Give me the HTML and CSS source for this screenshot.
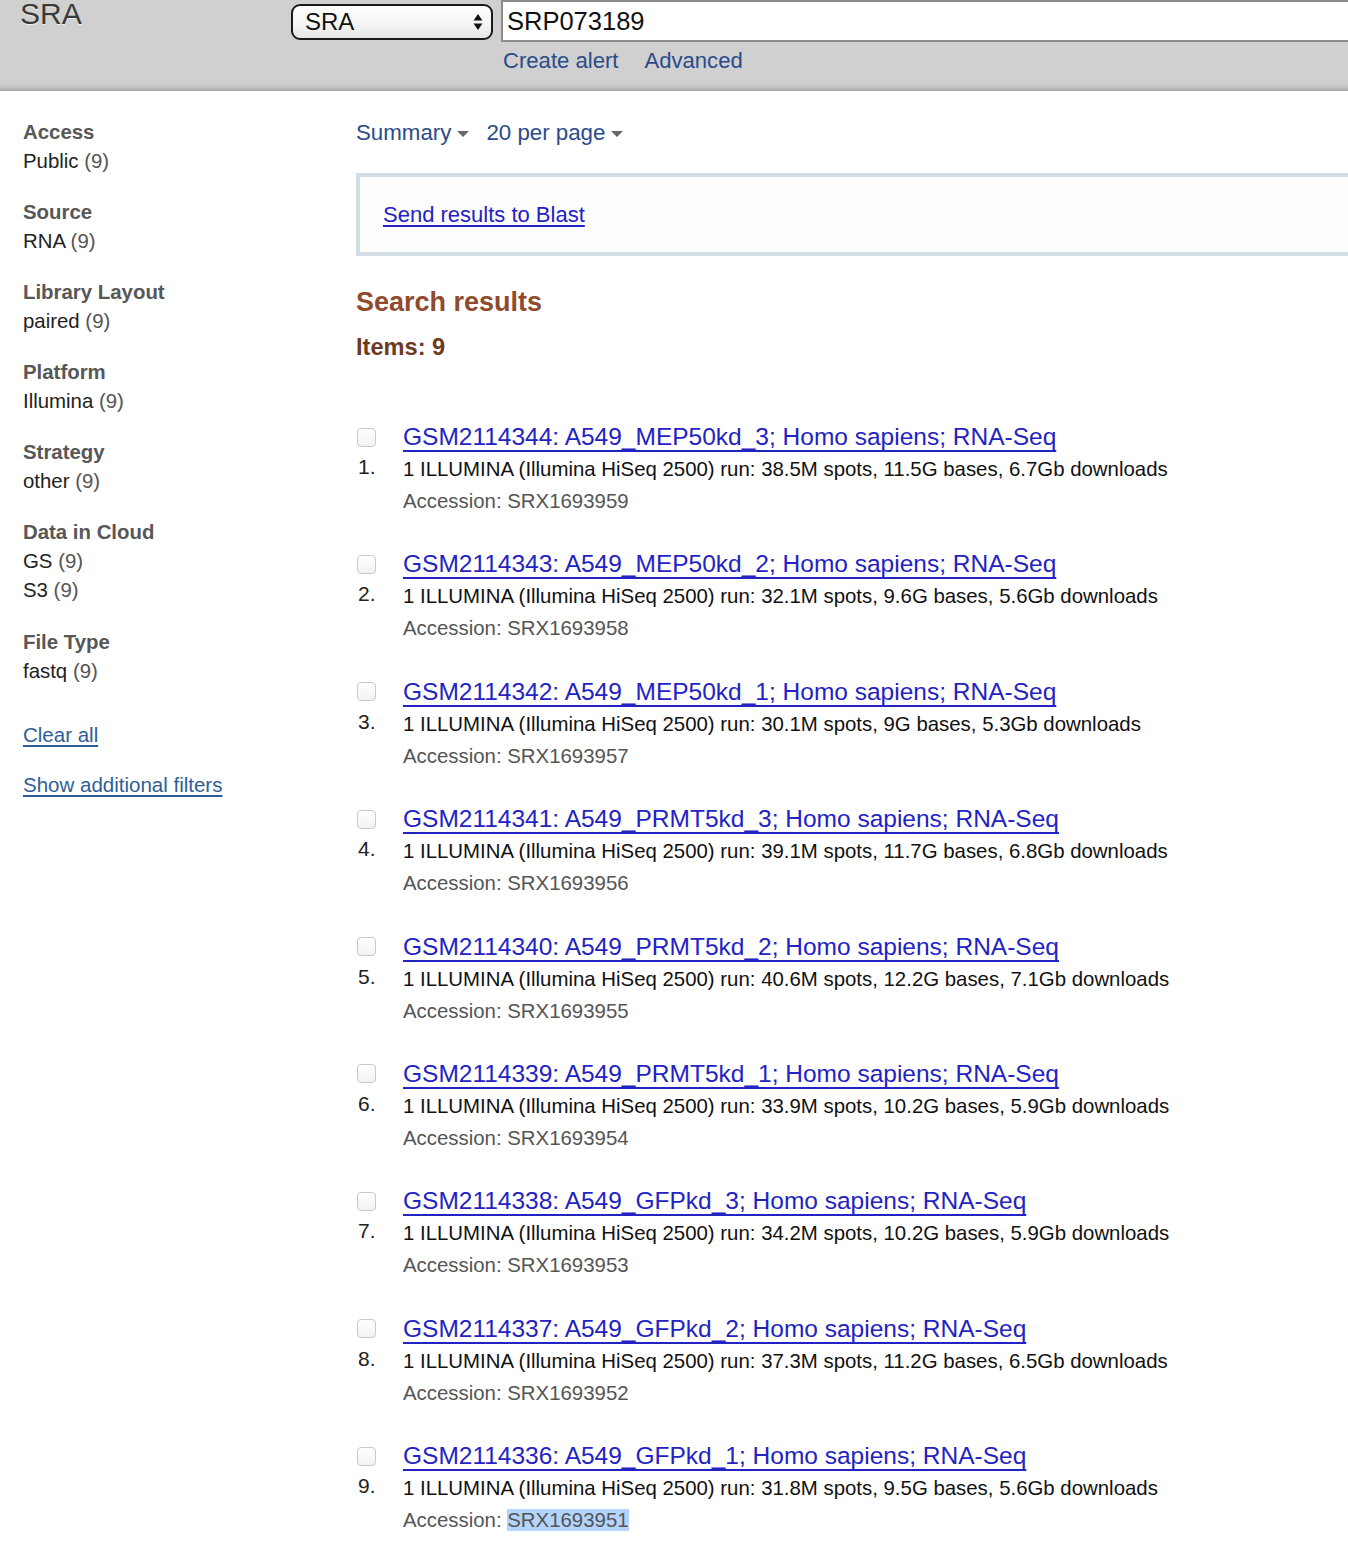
FILE: index.html
```html
<!DOCTYPE html>
<html>
<head>
<meta charset="utf-8">
<title>SRA results</title>
<link rel="stylesheet" href="styles.css">
</head>
<body>
<header class="masthead">
  <div class="brand">SRA</div>
  <div class="search">
    <div class="search-row">
      <div class="db-select"><span>SRA</span>
        <svg class="updown" width="10" height="18" viewBox="0 0 10 18"><path d="M5 1 L9.5 7.5 H0.5 Z" fill="#111"/><path d="M5 17 L9.5 10.5 H0.5 Z" fill="#111"/></svg>
      </div>
      <div class="term">SRP073189</div>
    </div>
    <div class="search-links"><a href="#">Create alert</a><a href="#">Advanced</a></div>
  </div>
</header>

<div class="page">
  <aside class="filters">
    <div class="fgroup"><div class="fhead">Access</div><div class="fval">Public <span class="cnt">(9)</span></div></div>
    <div class="fgroup"><div class="fhead">Source</div><div class="fval">RNA <span class="cnt">(9)</span></div></div>
    <div class="fgroup"><div class="fhead">Library Layout</div><div class="fval">paired <span class="cnt">(9)</span></div></div>
    <div class="fgroup"><div class="fhead">Platform</div><div class="fval">Illumina <span class="cnt">(9)</span></div></div>
    <div class="fgroup"><div class="fhead">Strategy</div><div class="fval">other <span class="cnt">(9)</span></div></div>
    <div class="fgroup"><div class="fhead">Data in Cloud</div><div class="fval">GS <span class="cnt">(9)</span></div><div class="fval">S3 <span class="cnt">(9)</span></div></div>
    <div class="fgroup"><div class="fhead">File Type</div><div class="fval">fastq <span class="cnt">(9)</span></div></div>
    <a class="flink clear" href="#">Clear all</a>
    <a class="flink" href="#">Show additional filters</a>
  </aside>

  <main class="content">
    <div class="display-bar">
      <span class="dd">Summary<i class="caret"></i></span>
      <span class="dd">20 per page<i class="caret"></i></span>
    </div>
    <div class="blast-box"><a href="#">Send results to Blast</a></div>
    <h2 class="results-title">Search results</h2>
    <h3 class="items">Items: 9</h3>

    <ol class="results">
      <li class="result"><span class="chk"></span><span class="num">1.</span><a class="rtitle" href="#">GSM2114344: A549_MEP50kd_3; Homo sapiens; RNA-Seq</a><div class="desc">1 ILLUMINA (Illumina HiSeq 2500) run: 38.5M spots, 11.5G bases, 6.7Gb downloads</div><div class="acc">Accession: SRX1693959</div></li>
      <li class="result"><span class="chk"></span><span class="num">2.</span><a class="rtitle" href="#">GSM2114343: A549_MEP50kd_2; Homo sapiens; RNA-Seq</a><div class="desc">1 ILLUMINA (Illumina HiSeq 2500) run: 32.1M spots, 9.6G bases, 5.6Gb downloads</div><div class="acc">Accession: SRX1693958</div></li>
      <li class="result"><span class="chk"></span><span class="num">3.</span><a class="rtitle" href="#">GSM2114342: A549_MEP50kd_1; Homo sapiens; RNA-Seq</a><div class="desc">1 ILLUMINA (Illumina HiSeq 2500) run: 30.1M spots, 9G bases, 5.3Gb downloads</div><div class="acc">Accession: SRX1693957</div></li>
      <li class="result"><span class="chk"></span><span class="num">4.</span><a class="rtitle" href="#">GSM2114341: A549_PRMT5kd_3; Homo sapiens; RNA-Seq</a><div class="desc">1 ILLUMINA (Illumina HiSeq 2500) run: 39.1M spots, 11.7G bases, 6.8Gb downloads</div><div class="acc">Accession: SRX1693956</div></li>
      <li class="result"><span class="chk"></span><span class="num">5.</span><a class="rtitle" href="#">GSM2114340: A549_PRMT5kd_2; Homo sapiens; RNA-Seq</a><div class="desc">1 ILLUMINA (Illumina HiSeq 2500) run: 40.6M spots, 12.2G bases, 7.1Gb downloads</div><div class="acc">Accession: SRX1693955</div></li>
      <li class="result"><span class="chk"></span><span class="num">6.</span><a class="rtitle" href="#">GSM2114339: A549_PRMT5kd_1; Homo sapiens; RNA-Seq</a><div class="desc">1 ILLUMINA (Illumina HiSeq 2500) run: 33.9M spots, 10.2G bases, 5.9Gb downloads</div><div class="acc">Accession: SRX1693954</div></li>
      <li class="result"><span class="chk"></span><span class="num">7.</span><a class="rtitle" href="#">GSM2114338: A549_GFPkd_3; Homo sapiens; RNA-Seq</a><div class="desc">1 ILLUMINA (Illumina HiSeq 2500) run: 34.2M spots, 10.2G bases, 5.9Gb downloads</div><div class="acc">Accession: SRX1693953</div></li>
      <li class="result"><span class="chk"></span><span class="num">8.</span><a class="rtitle" href="#">GSM2114337: A549_GFPkd_2; Homo sapiens; RNA-Seq</a><div class="desc">1 ILLUMINA (Illumina HiSeq 2500) run: 37.3M spots, 11.2G bases, 6.5Gb downloads</div><div class="acc">Accession: SRX1693952</div></li>
      <li class="result"><span class="chk"></span><span class="num">9.</span><a class="rtitle" href="#">GSM2114336: A549_GFPkd_1; Homo sapiens; RNA-Seq</a><div class="desc">1 ILLUMINA (Illumina HiSeq 2500) run: 31.8M spots, 9.5G bases, 5.6Gb downloads</div><div class="acc">Accession: <span class="sel">SRX1693951</span></div></li>
    </ol>
  </main>
</div>
</body>
</html>
```

FILE: styles.css
```css
html, body {
  margin: 0;
  padding: 0;
  background: #fff;
}
body {
  font-family: "Liberation Sans", Arial, Helvetica, sans-serif;
  color: #222;
  width: 1348px;
  overflow: hidden;
}
a { text-decoration: none; }

.masthead {
  height: 91px;
  box-sizing: border-box;
  display: flex;
  background: linear-gradient(to bottom, #d0d0d0 0px, #d0d0d0 82px, #c4c4c4 87px, #a9a9a9 91px);
}
.brand {
  width: 291px;
  box-sizing: border-box;
  padding-left: 20px;
  font-size: 30px;
  line-height: 30px;
  margin-top: -1px;
  color: #3a3a3a;
  text-shadow: 0 1px 0 #eee;
}
.search {
  flex: 1;
  display: flex;
  flex-direction: column;
}
.search-row {
  display: flex;
  align-items: flex-start;
  gap: 8px;
}
.db-select {
  margin-top: 4px;
  width: 202px;
  height: 36px;
  box-sizing: border-box;
  border: 2px solid #1a1a1a;
  border-radius: 9px;
  background: linear-gradient(to bottom, #ffffff 0%, #f7f7f7 50%, #e6e6e6 100%);
  display: flex;
  align-items: center;
  justify-content: space-between;
  padding: 0 8px 0 12px;
  font-size: 24px;
  color: #111;
}
.term {
  flex: 1;
  height: 42px;
  box-sizing: border-box;
  border: 2px solid #8c8c8c;
  border-right: none;
  background: #fff;
  font-size: 25.5px;
  line-height: 38px;
  padding-left: 4px;
  color: #111;
}
.search-links {
  display: flex;
  gap: 26px;
  padding-left: 212px;
  margin-top: 5px;
  font-size: 22.1px;
  line-height: 28px;
}
.search-links a { color: #2b4b8a; }

.page {
  display: flex;
  align-items: flex-start;
}
.filters {
  width: 356px;
  box-sizing: border-box;
  padding: 26.5px 0 0 23px;
  display: flex;
  flex-direction: column;
  align-items: flex-start;
}
.fgroup { margin-bottom: 22.2px; }
.fhead {
  font-weight: bold;
  font-size: 20.4px;
  line-height: 29px;
  color: #575757;
}
.fval {
  font-size: 20.4px;
  line-height: 29px;
  color: #222;
}
.cnt { color: #555; }
.flink {
  font-size: 20.5px;
  line-height: 29px;
  color: #2e5e98;
  text-decoration: underline;
  text-underline-offset: 3px;
}
.flink.clear { margin-top: 12.5px; margin-bottom: 21px; }

.content {
  flex: 1;
  padding-top: 27px;
}
.display-bar {
  display: flex;
  gap: 17px;
  font-size: 22.3px;
  line-height: 29px;
  color: #2b4b8a;
}
.dd { display: inline-flex; align-items: center; }
.caret {
  display: inline-block;
  width: 0; height: 0;
  margin-left: 6px;
  margin-top: 3px;
  border-left: 6px solid transparent;
  border-right: 6px solid transparent;
  border-top: 6px solid #666;
}
.blast-box {
  margin-top: 26px;
  height: 83px;
  box-sizing: border-box;
  border: 4px solid #d3dde6;
  border-right: none;
  background: #fdfdfd;
  padding: 24px 0 0 23px;
  font-size: 22px;
  line-height: 28px;
}
.blast-box a {
  color: #2323c4;
  text-decoration: underline;
  text-underline-offset: 3px;
}
.results-title {
  margin: 30px 0 0 0;
  font-size: 27px;
  line-height: 32px;
  color: #8f4b2b;
  font-weight: bold;
}
.items {
  margin: 15px 0 0 0;
  font-size: 23.6px;
  line-height: 28px;
  color: #6d3a20;
  font-weight: bold;
}
.results {
  list-style: none;
  margin: 60px 0 0 0;
  padding: 0;
}
.result {
  display: grid;
  grid-template-columns: 47px auto;
  grid-template-rows: 32px 32px 32px;
  margin-bottom: 31.4px;
}
.chk {
  grid-column: 1; grid-row: 1;
  align-self: center;
  width: 17px; height: 17px;
  margin-left: 1px;
  border: 1px solid #c9c9c9;
  border-radius: 4px;
  background: linear-gradient(#fff, #f2f2f2);
}
.num {
  grid-column: 1; grid-row: 2;
  font-size: 21px;
  line-height: 28px;
  padding-left: 2px;
  color: #222;
}
.rtitle {
  grid-column: 2; grid-row: 1;
  justify-self: start;
  font-size: 24.5px;
  line-height: 32px;
  color: #2323c4;
  text-decoration: underline;
  text-decoration-skip-ink: none;
  text-underline-offset: 5px;
}
.desc {
  grid-column: 2; grid-row: 2;
  font-size: 20.4px;
  line-height: 32px;
  color: #111;
}
.acc {
  grid-column: 2; grid-row: 3;
  font-size: 20.4px;
  line-height: 32px;
  color: #555;
}
.sel { background: #b3d4fc; }
```
